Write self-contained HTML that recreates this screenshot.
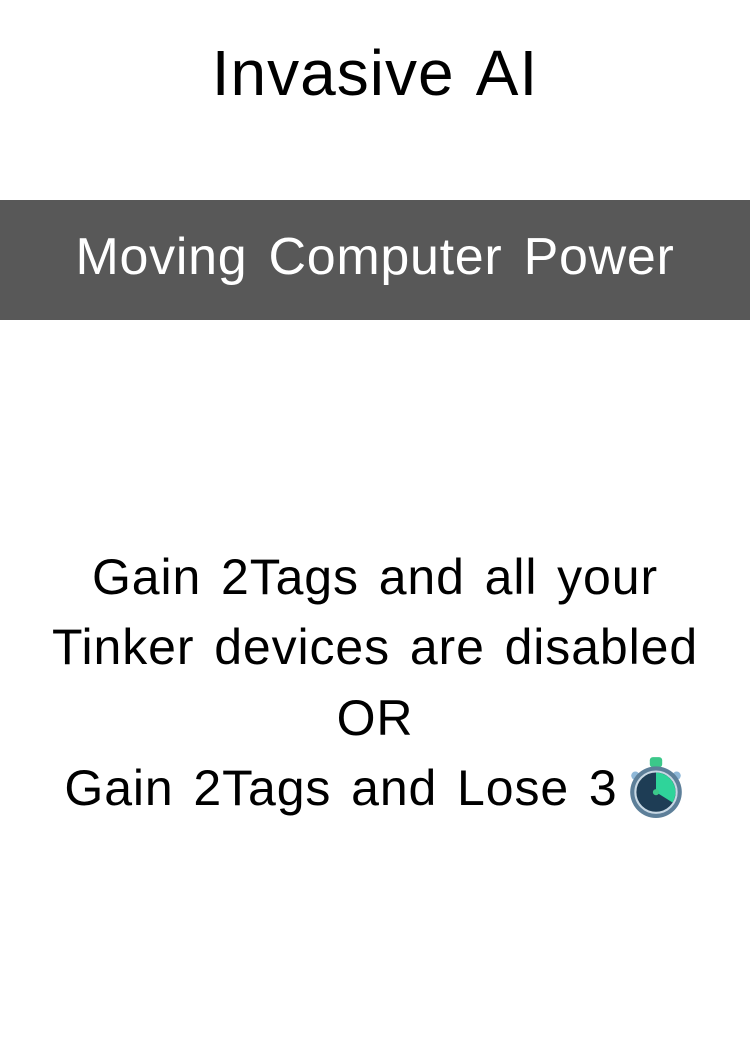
<!DOCTYPE html>
<html><head><style>
body{margin:0;width:750px;height:1050px;background:#fff;font-family:"Liberation Sans",sans-serif;color:#000;position:relative;overflow:hidden}
.t{position:absolute;left:0;width:750px;text-align:center;white-space:nowrap}
#title{top:33px;font-size:64px;line-height:80px;letter-spacing:1px;word-spacing:6px}
#banner{position:absolute;top:200px;left:0;width:750px;height:120px;background:#585858}
#bt{top:222px;font-size:52px;line-height:70px;color:#fff;letter-spacing:0.7px;word-spacing:6px}
.b{font-size:50px;line-height:70px;letter-spacing:0.9px;word-spacing:5px}
</style></head><body>
<div class="t" id="title">Invasive AI</div>
<div id="banner"></div>
<div class="t" id="bt">Moving Computer Power</div>
<div class="t b" style="top:542px">Gain 2Tags and all your</div>
<div class="t b" style="top:612px">Tinker devices are disabled</div>
<div class="t b" style="top:683px">OR</div>
<div class="t b" style="top:753px">Gain 2Tags and Lose 3<svg width="60" height="64" viewBox="0 0 56 62" style="vertical-align:-14px;margin-left:8px">
<circle cx="8" cy="20" r="4" fill="#8fb8d8"/><circle cx="48" cy="20" r="4" fill="#8fb8d8"/>
<rect x="22" y="2" width="12" height="10" rx="3" fill="#3cc88a"/>
<circle cx="28" cy="36" r="25" fill="#5d7f99"/>
<circle cx="28" cy="36" r="20" fill="#1e3d55" stroke="#c8d8e4" stroke-width="2"/>
<path d="M28 36 L28 17 A19 19 0 0 1 44 46 Z" fill="#2fd49a"/>
<circle cx="28" cy="36" r="3" fill="#3cc88a"/>
</svg></div>
</body></html>
